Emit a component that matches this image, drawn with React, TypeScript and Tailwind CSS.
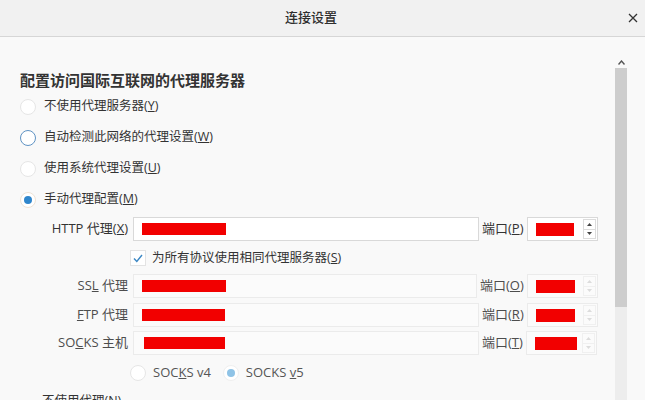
import React from "react";

const font = { fontFamily: '"Open Sans", "Noto Sans CJK SC", sans-serif' };

function Radio({ state }: { state: "off" | "focus" | "on" | "onDisabled" }) {
  if (state === "focus")
    return <span className="w-[16px] h-[16px] rounded-full border-[1.5px] border-[#5f93c4] bg-white shrink-0" />;
  if (state === "on")
    return (
      <span className="w-[16px] h-[16px] rounded-full border border-[#eee3d6] bg-white shrink-0 flex items-center justify-center">
        <span className="w-[8px] h-[8px] rounded-full bg-[#2f86cc]" />
      </span>
    );
  if (state === "onDisabled")
    return (
      <span className="w-[16px] h-[16px] rounded-full border border-[#efefef] bg-white shrink-0 flex items-center justify-center">
        <span className="w-[8px] h-[8px] rounded-full bg-[#8fc3e6]" />
      </span>
    );
  return <span className="w-[16px] h-[16px] rounded-full border border-[#e6e6e6] bg-white shrink-0" />;
}

function Spinner({ enabled }: { enabled: boolean }) {
  const c = enabled ? "#444" : "#dcdcdc";
  const b = enabled ? "border-[#dcdcdc]" : "border-[#f0f0f0]";
  return (
    <div className={`flex flex-col w-[13px] h-[20px] border ${b} mr-[1px]`}>
      <div className="flex-1 flex items-center justify-center">
        <svg width="5" height="3" viewBox="0 0 5 3"><path d="M0 3 L2.5 0 L5 3Z" fill={c} /></svg>
      </div>
      <div className={`flex-1 flex items-center justify-center border-t ${b}`}>
        <svg width="5" height="3" viewBox="0 0 5 3"><path d="M0 0 L2.5 3 L5 0Z" fill={c} /></svg>
      </div>
    </div>
  );
}

function ProxyRow({
  label,
  portLabel,
  enabled,
  inputW,
  red,
  portRed,
  mt,
}: {
  label: React.ReactNode;
  portLabel: React.ReactNode;
  enabled: boolean;
  inputW: string;
  red: string;
  portRed: string;
  mt: string;
}) {
  const box = enabled ? "bg-white border-[#d9d9d9]" : "bg-[#fbfbfb] border-[#ebebeb]";
  const txt = enabled ? "text-[#333]" : "text-[#4d4d4d]";
  return (
    <div className={`flex items-center h-[24px] ${mt}`}>
      <div className={`w-[108px] text-right text-[13px] ${txt} whitespace-nowrap`}>{label}</div>
      <div className={`ml-[5px] h-[24px] border ${box} ${inputW} flex items-center pl-[8px]`}>
        <div className={`h-[12px] bg-[#f20000] ${red}`} />
      </div>
      <div className={`ml-[3px] text-[13px] ${txt} whitespace-nowrap`}>{portLabel}</div>
      <div className={`ml-[3px] h-[24px] w-[71px] border ${box} flex items-center justify-between pl-[8px]`}>
        <div className={`h-[13px] bg-[#f20000] ${portRed}`} />
        <Spinner enabled={enabled} />
      </div>
    </div>
  );
}

export default function App() {
  return (
    <div className="w-[645px] h-[400px] overflow-hidden bg-[#f9f9f9] flex flex-col" style={font}>
      <div className="h-[37px] shrink-0 bg-[#f1f1f1] border-b border-[#d6d6d6] flex items-center pl-[285px] pr-[7px]">
        <div className="text-[13px] text-[#2e2e2e] font-medium">连接设置</div>
        <div className="flex-1" />
        <svg width="10" height="10" viewBox="0 0 10 10">
          <path d="M1 1 L9 9 M9 1 L1 9" stroke="#333" strokeWidth="1.3" />
        </svg>
      </div>
      <div className="flex flex-1 min-h-0">
        <div className="flex-1 pl-[20px] pt-[33px]">
          <div className="text-[15px] leading-[20px] font-bold text-[#333]">配置访问国际互联网的代理服务器</div>
          <div className="mt-[1px] flex flex-col">
            <div className="h-[31px] flex items-center gap-[8px] text-[12.5px] text-[#333]">
              <Radio state="off" />
              <span>不使用代理服务器(<u>Y</u>)</span>
            </div>
            <div className="h-[31px] flex items-center gap-[8px] text-[12.5px] text-[#333]">
              <Radio state="focus" />
              <span>自动检测此网络的代理设置(<u>W</u>)</span>
            </div>
            <div className="h-[31px] flex items-center gap-[8px] text-[12.5px] text-[#333]">
              <Radio state="off" />
              <span>使用系统代理设置(<u>U</u>)</span>
            </div>
            <div className="h-[31px] flex items-center gap-[8px] text-[12.5px] text-[#333]">
              <Radio state="on" />
              <span>手动代理配置(<u>M</u>)</span>
            </div>
          </div>
          <ProxyRow
            label={<>HTTP 代理(<u>X</u>)</>}
            portLabel={<>端口(<u>P</u>)</>}
            enabled
            inputW="w-[346px]"
            red="w-[84px]"
            portRed="w-[38px]"
            mt="mt-[2px]"
          />
          <div className="mt-[1px] h-[32px] flex items-center pl-[110px]">
            <span className="w-[16px] h-[16px] border border-[#e3e3e3] bg-white flex items-center justify-center">
              <svg width="10" height="9" viewBox="0 0 10 9">
                <path d="M1 4.5 L3.8 7.5 L9 1" fill="none" stroke="#3b87c4" strokeWidth="1.4" />
              </svg>
            </span>
            <span className="ml-[6px] text-[12.5px] text-[#333]">为所有协议使用相同代理服务器(<u>S</u>)</span>
          </div>
          <ProxyRow
            label={<>SS<u>L</u> 代理</>}
            portLabel={<>端口(<u>O</u>)</>}
            enabled={false}
            inputW="w-[344px]"
            red="w-[84px]"
            portRed="w-[39px]"
            mt="mt-0"
          />
          <ProxyRow
            label={<><u>F</u>TP 代理</>}
            portLabel={<>端口(<u>R</u>)</>}
            enabled={false}
            inputW="w-[346px]"
            red="w-[83px]"
            portRed="w-[39px]"
            mt="mt-[5px]"
          />
          <ProxyRow
            label={<>SO<u>C</u>KS 主机</>}
            portLabel={<>端口(<u>T</u>)</>}
            enabled={false}
            inputW="w-[346px]"
            red="w-[81px] ml-[2px]"
            portRed="w-[42px]"
            mt="mt-[4px]"
          />
          <div className="h-[36px] flex items-center pl-[110px] text-[13px] text-[#555]">
            <Radio state="off" />
            <span className="ml-[7px]">SOC<u>K</u>S v4</span>
            <span className="ml-[12px]"><Radio state="onDisabled" /></span>
            <span className="ml-[7px]">SOCKS <u>v</u>5</span>
          </div>
          <div className="pl-[22px] text-[12.5px] leading-[20px] text-[#333]">不使用代理(<u>N</u>)</div>
        </div>
        <div className="w-[12px] mr-[18px] mt-[19px] flex flex-col">
          <div className="h-[12px] flex items-center justify-center">
            <svg width="7" height="5" viewBox="0 0 7 5">
              <path d="M0.5 4.5 L3.5 1 L6.5 4.5" fill="none" stroke="#555" strokeWidth="1.4" />
            </svg>
          </div>
          <div className="h-[239px] bg-[#cdcdcd]" />
          <div className="flex-1 bg-[#ededed]" />
        </div>
      </div>
    </div>
  );
}
